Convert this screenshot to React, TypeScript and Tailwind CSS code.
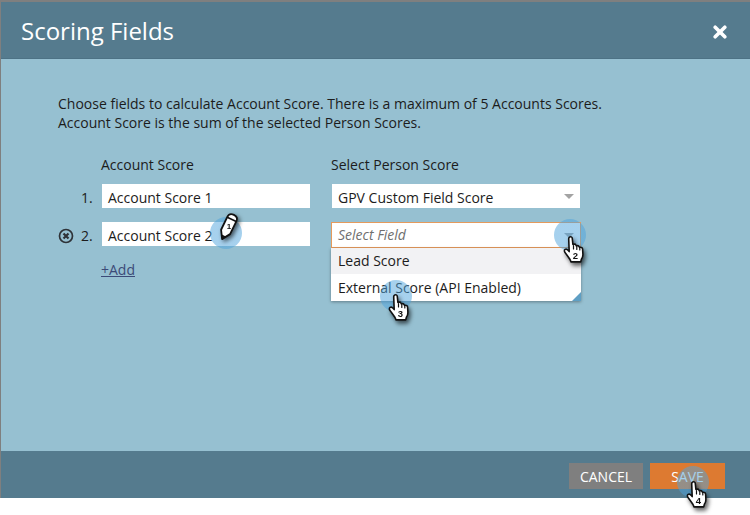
const font = "font-['Open_Sans',sans-serif]";

// blue touch circle over the page, text shows through it
const Spot = ({ className }: { className: string }) => (
  <div className={"absolute w-8 h-8 rounded-full bg-[radial-gradient(circle,#4ea3dc80_0%,#4ea3dc80_72%,#4ea3dc30_100%)] " + className} />
);

const Hand = ({ n, className }: { n: string; className: string }) => (
  <svg className={"absolute drop-shadow-[2px_3px_2px_rgba(0,0,0,0.6)] " + className} width="23" height="29" viewBox="0 0 23 29">
    <path
      d="M6.500 2.200c1.100-1 2.600-.3 2.800 1.200l.6 6.100 1-.3c.9-.2 1.700.1 2 .8l.4.9.8-.2c1-.2 1.800.2 2.100 1l.3.7.6-.1c1.400-.2 2.400.7 2.500 2l.3 5c.1 2.200-.5 3.600-1.500 5l-.7 2.600H8l-1-2.400C5.500 22 3.700 19.600 2 17.400c-.9-1.200-.8-2.400.1-3 1-.6 2.100-.2 3 .9l1.100 1.300L5.700 3.800c0-.7.3-1.200.8-1.600z"
      fill="#fff"
      stroke="#111"
      strokeWidth="1.600"
      strokeLinejoin="round"
    />
    <path d="M10.500 10.500v3.500M13.800 11.500v3M16.800 13v2" stroke="#111" strokeWidth="1.200" strokeLinecap="round" fill="none" />
    <text x="12.500" y="24" fontSize="9.500" fontWeight="700" textAnchor="middle" fill="#111" fontFamily="'Liberation Sans',sans-serif">{n}</text>
  </svg>
);

const Arrow = () => (
  <div className="w-0 h-0 border-l-[5px] border-r-[5px] border-t-[5px] border-l-transparent border-r-transparent border-t-[#a3a3a3]" />
);

export default function App() {
  return (
    <div className={"relative w-[750px] h-[515px] bg-white overflow-hidden text-[#1c1c1c] " + font}>
      <div className="h-[498px] flex flex-col bg-[#7f7f7f] pt-[2px] pl-px">
        <header className="h-[57px] shrink-0 bg-[#557b8e] border-b border-[#4d7285] flex items-center justify-between pl-5 pr-[23px] text-white">
          <h1 className="text-[24px] leading-none pt-[2px]">Scoring Fields</h1>
          <svg width="14" height="14" viewBox="0 0 14 14" className="mt-[3px]">
            <path d="M2.200 2.200l9.600 9.600M11.800 2.200l-9.600 9.600" stroke="#fff" strokeWidth="3.600" strokeLinecap="round" />
          </svg>
        </header>

        <main className="flex-1 bg-[#96c0d1] pl-[57px] pt-[35px] text-[14px]">
          <p className="leading-[19px]">
            Choose fields to calculate Account Score. There is a maximum of 5 Accounts Scores.
            <br />
            Account Score is the sum of the selected Person Scores.
          </p>

          <div className="flex mt-[23px] leading-[19px]">
            <div className="w-[273px] pl-[43px]">Account Score</div>
            <div>Select Person Score</div>
          </div>

          <div className="flex items-start mt-[10px] h-[24px] leading-[28px]">
            <div className="w-[44px] pl-[23px]">1.</div>
            <div className="w-[208px] h-[24px] bg-white pl-[6px]">Account Score 1</div>
            <div className="w-[248px] h-[24px] ml-[22px] bg-white flex items-center justify-between pl-[6px] pr-[6px]">
              <span className="leading-[24px] pt-[4px]">GPV Custom Field Score</span>
              <Arrow />
            </div>
          </div>

          <div className="flex items-start mt-[14px] h-[24px] leading-[28px]">
            <div className="w-[44px] h-[28px] flex items-center">
              <svg width="16" height="16" viewBox="0 0 16 16">
                <circle cx="8" cy="8" r="6.500" fill="none" stroke="#2e3238" strokeWidth="1.700" />
                <path d="M5.500 5.500l5 5M10.500 5.500l-5 5" stroke="#2e3238" strokeWidth="2.200" />
              </svg>
              <span className="ml-[7px]">2.</span>
            </div>
            <div className="w-[208px] h-[24px] bg-white pl-[6px]">Account Score 2</div>
            <div className="relative w-[250px] h-[26px] ml-[21px] bg-white border border-[#e59a5c] flex items-center justify-between pl-[6px] pr-[6px] italic text-[#6f6f6f]">
              Select Field
              <Arrow />
              <div className="absolute left-[-1px] top-[25px] w-[250px] h-[53px] bg-white shadow-[0_1px_3px_rgba(0,0,0,0.35)] not-italic text-[#1c1c1c] overflow-hidden">
                <div className="h-[26px] bg-[#f2f2f4] flex items-center pl-[7px]">Lead Score</div>
                <div className="h-[27px] flex items-center pl-[7px]">External Score (API Enabled)</div>
                <div className="absolute right-0 bottom-0 w-0 h-0 border-l-[9px] border-b-[9px] border-l-transparent border-b-[#5f9fc4]" />
              </div>
            </div>
          </div>

          <div className="mt-[13px] pl-[43px]">
            <span className="underline text-[#3c4a78] leading-[19px]">+Add</span>
          </div>
        </main>

        <footer className="h-[47px] shrink-0 bg-[#557b8e] flex items-center justify-end gap-[7px] pr-[25px] pt-[3px] text-white text-[14px]">
          <div className="w-[74px] h-[26px] bg-[#7f7f7f] flex items-center justify-center">CANCEL</div>
          <div className="w-[75px] h-[26px] bg-[#dd7a31] flex items-center justify-center">SAVE</div>
        </footer>
      </div>

      <Spot className="left-[210px] top-[217px]" />
      <svg className="absolute left-[213px] top-[210px] drop-shadow-[2px_2px_2px_rgba(0,0,0,0.6)]" width="30" height="34" viewBox="0 0 30 34">
        <g transform="rotate(26 15 17)">
          <path d="M10 8c0-3 2-4.500 5-4.500s5 1.500 5 4.500v14.500l-5 8-5-8z" fill="#fff" stroke="#111" strokeWidth="1.800" strokeLinejoin="round" />
          <path d="M10 8.500h10" stroke="#111" strokeWidth="1.600" />
          <path d="M12.800 26.500l2.200 4 2.200-4z" fill="#111" />
        </g>
        <text x="16" y="19" fontSize="8" fontWeight="700" textAnchor="middle" fill="#111" fontFamily="'Liberation Sans',sans-serif">1</text>
      </svg>

      <Spot className="left-[554px] top-[219px]" />
      <Hand n="2" className="left-[563px] top-[235px]" />

      <Spot className="left-[380px] top-[280px]" />
      <Hand n="3" className="left-[388px] top-[293px]" />

      <Spot className="left-[677px] top-[466px]" />
      <Hand n="4" className="left-[686px] top-[480px]" />
    </div>
  );
}
